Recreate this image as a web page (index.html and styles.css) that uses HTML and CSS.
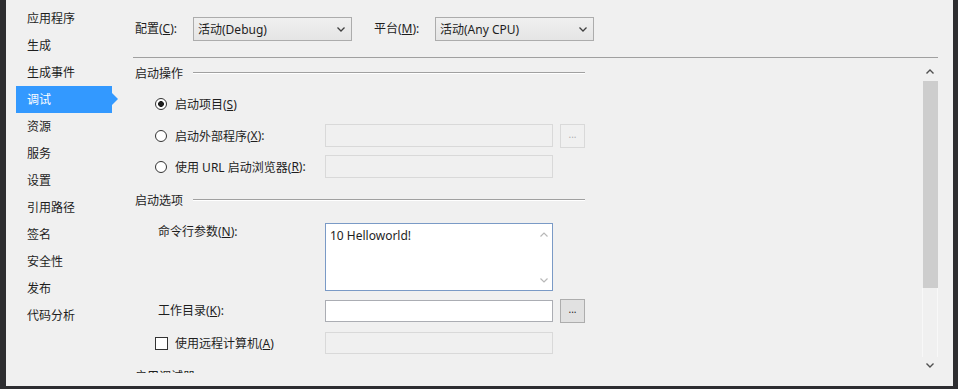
FILE: index.html
```html
<html>
  <head>
    <title>调试 - 项目属性</title>
    <meta charset="utf-8">
    <link rel="stylesheet" href="styles.css">
  </head>
  <body>
    <div class="frame">
      <ul class="nav">
        <li>应用程序</li>
        <li>生成</li>
        <li>生成事件</li>
        <li class="active">调试</li>
        <li>资源</li>
        <li>服务</li>
        <li>设置</li>
        <li>引用路径</li>
        <li>签名</li>
        <li>安全性</li>
        <li>发布</li>
        <li>代码分析</li>
      </ul>
      <div class="main">
        <div class="toolbar">
          <span class="tb-label">配置(<u>C</u>):</span>
          <div class="select">
            <span>活动(Debug)</span>
            <svg width="8" height="5" viewBox="0 0 8 5"><path d="M0.5 0.5 L4 4 L7.5 0.5" fill="none" stroke="#404040" stroke-width="1.3"/></svg>
          </div>
          <span class="tb-label tb-label-2">平台(<u>M</u>):</span>
          <div class="select">
            <span>活动(Any CPU)</span>
            <svg width="8" height="5" viewBox="0 0 8 5"><path d="M0.5 0.5 L4 4 L7.5 0.5" fill="none" stroke="#404040" stroke-width="1.3"/></svg>
          </div>
        </div>
        <div class="panel">
          <div class="content">
            <div class="group-title"><span>启动操作</span><i class="rule"></i></div>

            <div class="row row-radio1">
              <label class="opt"><i class="radio checked"></i>启动项目(<u>S</u>)</label>
            </div>
            <div class="row row-radio2">
              <label class="opt"><i class="radio"></i>启动外部程序(<u>X</u>):</label>
              <div class="field disabled"></div>
              <div class="btn disabled">...</div>
            </div>
            <div class="row row-radio3">
              <label class="opt"><i class="radio"></i>使用 URL 启动浏览器(<u>R</u>):</label>
              <div class="field disabled"></div>
            </div>

            <div class="group-title group-2"><span>启动选项</span><i class="rule"></i></div>

            <div class="row row-cmd">
              <label class="lbl">命令行参数(<u>N</u>):</label>
              <div class="textarea">
                <div class="ta-text">10 Helloworld!</div>
                <div class="ta-scroll">
                  <svg width="8" height="5" viewBox="0 0 8 5"><path d="M0.5 4.5 L4 1 L7.5 4.5" fill="none" stroke="#b8b8b8" stroke-width="1.2"/></svg>
                  <svg width="8" height="5" viewBox="0 0 8 5"><path d="M0.5 0.5 L4 4 L7.5 0.5" fill="none" stroke="#b8b8b8" stroke-width="1.2"/></svg>
                </div>
              </div>
            </div>
            <div class="row row-dir">
              <label class="lbl">工作目录(<u>K</u>):</label>
              <div class="field"></div>
              <div class="btn">...</div>
            </div>
            <div class="row row-remote">
              <label class="opt"><i class="check"></i>使用远程计算机(<u>A</u>)</label>
              <div class="field disabled"></div>
            </div>

            <div class="group-title group-3"><span>启用调试器</span><i class="rule"></i></div>
          </div>
          <div class="vscroll">
            <div class="sb-btn">
              <svg width="8" height="5" viewBox="0 0 8 5"><path d="M0.5 4.5 L4 1 L7.5 4.5" fill="none" stroke="#505050" stroke-width="1.4"/></svg>
            </div>
            <div class="sb-thumb"></div>
            <div class="sb-track"></div>
            <div class="sb-btn">
              <svg width="8" height="5" viewBox="0 0 8 5"><path d="M0.5 0.5 L4 4 L7.5 0.5" fill="none" stroke="#505050" stroke-width="1.4"/></svg>
            </div>
          </div>
        </div>
      </div>
    </div>
  </body>
</html>
```

FILE: styles.css
```css
body { margin: 0; background: #2d2d30; overflow: hidden; font-family: "Noto Sans", "Noto Sans CJK SC", sans-serif; font-size: 12px; color: #1e1e1e; }
u { text-decoration: underline; text-underline-offset: 1px; }

.frame { display: flex; margin-left: 6px; width: 947px; height: 386px; background: #f0f0f0; }

/* left page list */
.nav { list-style: none; margin: 0; padding: 5px 0 0 0; width: 124px; flex: none; }
.nav li { position: relative; box-sizing: border-box; height: 27px; line-height: 27px; width: 96px; margin-left: 10px; padding-left: 11px; }
.nav li.active { background: #3399ff; color: #fff; }
.nav li.active::after { content: ""; position: absolute; right: -6px; top: 7px; border-left: 6px solid #3399ff; border-top: 6px solid transparent; border-bottom: 6px solid transparent; }

.main { flex: 1; display: flex; flex-direction: column; padding-right: 15px; min-width: 0; }

/* config / platform bar */
.toolbar { display: flex; align-items: flex-start; box-sizing: border-box; height: 58px; margin-left: 3px; padding: 17px 0 0 2px; border-bottom: 1px solid #a0a0a0; }
.tb-label { width: 58px; line-height: 24px; }
.tb-label-2 { width: 61px; margin-left: 22px; }
.select { display: flex; align-items: center; justify-content: space-between; box-sizing: border-box; width: 159px; height: 24px; padding: 0 6px 0 4px; border: 1px solid #acacac; background: linear-gradient(#f0f0f0, #e5e5e5); }

/* scrolling page body */
.panel { display: flex; align-items: flex-start; height: 318px; }
.content { flex: 1; height: 315px; overflow: hidden; }

.group-title { display: flex; align-items: center; box-sizing: border-box; width: 455px; height: 30px; padding-left: 5px; }
.group-title .rule { flex: 1; margin-left: 10px; border-top: 1px solid #a0a0a0; border-bottom: 1px solid #fff; }
.group-2 { margin-top: 7px; }
.group-3 { margin-top: 6px; }

.row { display: flex; align-items: center; }
.row-radio1 { height: 24px; margin-top: 4px; }
.row-radio2 { height: 25px; margin-top: 7px; }
.row-radio3 { height: 23px; margin-top: 7px; }
.row-cmd { align-items: flex-start; height: 68px; margin-top: 8px; }
.row-dir { height: 24px; margin-top: 8px; }
.row-remote { height: 24px; margin-top: 8px; }

.opt { display: flex; align-items: center; box-sizing: border-box; width: 195px; padding-left: 25px; }
.lbl { box-sizing: border-box; width: 195px; padding-left: 28px; line-height: 18px; }

.radio { box-sizing: border-box; width: 12px; height: 12px; margin-right: 8px; border: 1px solid #333; border-radius: 50%; background: #fff; }
.radio.checked { background: radial-gradient(circle, #1e1e1e 0 2.6px, #fff 3.2px); }
.check { box-sizing: border-box; width: 13px; height: 13px; margin-right: 7px; border: 1px solid #333; background: #fff; }

.field { box-sizing: border-box; width: 228px; height: 22px; border: 1px solid #abadb3; background: #fff; }
.field.disabled { height: 23px; border-color: #d9d9d9; background: #f0f0f0; }
.row-remote .field.disabled { height: 22px; }

.btn { box-sizing: border-box; width: 25px; height: 24px; margin-left: 7px; border: 1px solid #adadad; background: #e1e1e1; font-size: 10px; line-height: 18px; text-align: center; }
.btn.disabled { border-color: #d9d9d9; background: #f0f0f0; color: #b0b0b0; }

.textarea { display: flex; box-sizing: border-box; width: 228px; height: 68px; border: 1px solid #7a9ac6; background: #fff; }
.ta-text { flex: 1; padding: 3px 4px; line-height: 18px; }
.ta-scroll { display: flex; flex-direction: column; justify-content: space-between; align-items: center; width: 17px; padding: 8px 0 7px; }

/* page scrollbar */
.vscroll { display: flex; flex-direction: column; width: 16px; height: 311px; margin-top: 5px; flex: none; }
.sb-btn { display: flex; align-items: center; justify-content: center; height: 17px; }
.sb-thumb { height: 207px; margin: 1px 0 0 1px; background: #cdcdcd; }
.sb-track { flex: 1; border-left: 1px solid #f8f8f8; border-right: 1px solid #f8f8f8; }
```
